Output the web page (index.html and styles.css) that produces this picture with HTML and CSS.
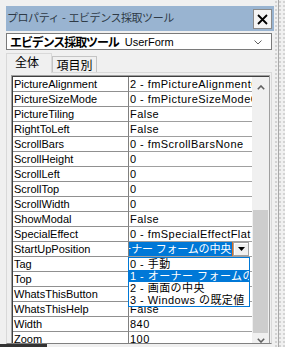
FILE: index.html
```html
<!DOCTYPE html>
<html lang="ja">
<head>
<meta charset="utf-8">
<link rel="stylesheet" href="styles.css">
</head>
<body>
<div class="win">
  <div class="titlebar">
    <span class="title">プロパティ - エビデンス採取ツール</span>
    <div class="close"><svg width="11" height="11" viewBox="0 0 11 11"><path d="M1 1L10 10M10 1L1 10" stroke="#000" stroke-width="1.8"/></svg></div>
  </div>
  <div class="combo">
    <b class="objname">エビデンス採取ツール</b>
    <span class="objtype">UserForm</span>
    <svg class="chev" width="8" height="5" viewBox="0 0 8 5"><path d="M0.5 0.5L4 4L7.5 0.5" fill="none" stroke="#606060" stroke-width="1"/></svg>
  </div>
  <div class="tabs">
    <div class="tab active">全体</div>
    <div class="tab">項目別</div>
  </div>
  <div class="page">
    <div class="grid">
      <div class="rows">
        <div class="row"><div class="name">PictureAlignment</div><div class="val">2 - fmPictureAlignmentCenter</div></div>
        <div class="row"><div class="name">PictureSizeMode</div><div class="val">0 - fmPictureSizeModeClip</div></div>
        <div class="row"><div class="name">PictureTiling</div><div class="val">False</div></div>
        <div class="row"><div class="name">RightToLeft</div><div class="val">False</div></div>
        <div class="row"><div class="name">ScrollBars</div><div class="val">0 - fmScrollBarsNone</div></div>
        <div class="row"><div class="name">ScrollHeight</div><div class="val">0</div></div>
        <div class="row"><div class="name">ScrollLeft</div><div class="val">0</div></div>
        <div class="row"><div class="name">ScrollTop</div><div class="val">0</div></div>
        <div class="row"><div class="name">ScrollWidth</div><div class="val">0</div></div>
        <div class="row"><div class="name">ShowModal</div><div class="val">False</div></div>
        <div class="row"><div class="name">SpecialEffect</div><div class="val">0 - fmSpecialEffectFlat</div></div>
        <div class="row"><div class="name">StartUpPosition</div>
          <div class="val editing">
            <div class="edit"><span class="edittext">1 - オーナー フォームの中央</span></div>
            <div class="dropbtn"><svg width="7" height="4" viewBox="0 0 7 4"><path d="M0 0H7L3.5 4Z" fill="#000"/></svg></div>
            <ul class="list">
              <li>0 - 手動</li>
              <li class="sel">1 - オーナー フォームの中央</li>
              <li>2 - 画面の中央</li>
              <li>3 - Windows の既定値</li>
            </ul>
          </div>
        </div>
        <div class="row"><div class="name">Tag</div><div class="val"></div></div>
        <div class="row"><div class="name">Top</div><div class="val">0</div></div>
        <div class="row"><div class="name">WhatsThisButton</div><div class="val">False</div></div>
        <div class="row"><div class="name">WhatsThisHelp</div><div class="val">False</div></div>
        <div class="row"><div class="name">Width</div><div class="val">840</div></div>
        <div class="row"><div class="name">Zoom</div><div class="val">100</div></div>
      </div>
      <div class="scrollbar">
        <div class="sbtn up"><svg width="8" height="5" viewBox="0 0 8 5"><path d="M0.8 4.2L4 1L7.2 4.2" fill="none" stroke="#606060" stroke-width="1.6"/></svg></div>
        <div class="track"><div class="thumb"></div></div>
        <div class="sbtn down"><svg width="8" height="5" viewBox="0 0 8 5"><path d="M0.8 0.8L4 4L7.2 0.8" fill="none" stroke="#606060" stroke-width="1.6"/></svg></div>
      </div>
    </div>
  </div>
  <div class="taskbar"></div>
</div>
<div class="edge"></div>
</body>
</html>
```

FILE: styles.css
```css
* { box-sizing: border-box; margin: 0; padding: 0; }
html, body { width: 285px; height: 347px; overflow: hidden; }
body {
  background: #f0f0f0;
  font-family: "Liberation Sans", "Noto Sans CJK JP", sans-serif;
  font-size: 11px;
  color: #000;
  display: flex;
}
.win {
  position: relative;
  width: 274px;
  height: 347px;
  padding: 6px 0 0 6px;
  display: flex;
  flex-direction: column;
}
.edge {
  flex: 1;
  background:
    linear-gradient(90deg, transparent 4px, #a8a8a8 4px, #a8a8a8 5px, transparent 5px),
    radial-gradient(circle, #d2d2d2 0.7px, transparent 1px) 0 0 / 4px 4px,
    #f0f0f0;
}
.titlebar {
  height: 25px;
  background: #99b4d1;
  display: flex;
  align-items: center;
  justify-content: space-between;
  padding: 0 2px 0 1px;
}
.title {
  font-family: "Noto Sans CJK JP", sans-serif;
  font-size: 11px;
  color: #2e3a46;
  letter-spacing: -0.45px;
  word-spacing: 1px;
  margin-top: -3px;
}
.close {
  width: 19px;
  height: 20px;
  background: #f4f4f4;
  border: 1px solid #8a8a8a;
  display: flex;
  align-items: center;
  justify-content: center;
  margin-top: 1px;
}
.combo {
  margin: 2px 2px 0 0;
  height: 17px;
  border: 1px solid #7a7a7a;
  background: #fff;
  display: flex;
  align-items: center;
  padding-left: 3px;
}
.objname {
  font-family: "Noto Sans CJK JP", sans-serif;
  font-size: 12px;
  font-weight: 700;
  letter-spacing: -1.1px;
  line-height: 15px;
}
.objtype {
  font-size: 11px;
  margin-left: 6px;
}
.chev { margin-left: auto; margin-right: 9px; margin-top: 1px; }
.tabs {
  margin-top: 3px;
  height: 19px;
  display: flex;
  align-items: flex-end;
  position: relative;
  z-index: 1;
}
.tab {
  font-family: "Noto Sans CJK JP", sans-serif;
  font-size: 12px;
  border: 1px solid #c4c4c4;
  border-bottom: none;
  height: 16px;
  width: 45px;
  display: flex;
  align-items: center;
  justify-content: center;
  line-height: 14px;
  background: #f0f0f0;
}
.tab.active {
  height: 20px;
  width: 46px;
  margin-bottom: -1px;
  border-color: #d9d9d9;
  padding-bottom: 3px;
  padding-right: 4px;
}
.page {
  height: 272px;
  margin-right: 2px;
  border: 1px solid #d9d9d9;
  border-bottom: 1px solid #808080;
  padding: 2px 1px 0 4px;
  overflow: hidden;
}
.grid {
  height: 272px;
  border: 1px solid #a0a0a0;
  display: flex;
}
.rows {
  flex: 1;
  border-left: 1px solid #404040;
  border-top: 1px solid #404040;
  background: #fff;
}
.row {
  position: relative;
  display: grid;
  grid-template-columns: 116px 1fr;
  height: 15px;
}
.name, .val {
  height: 15px;
  line-height: 14px;
  white-space: nowrap;
  overflow: hidden;
  border-bottom: 1px solid #a0a0a0;
}
.name {
  padding-left: 1px;
  border-right: 1px solid #808080;
  border-bottom-color: #909090;
}
.val { padding-left: 1px; letter-spacing: 0.45px; }
.val.editing {
  overflow: visible;
  display: flex;
  padding-left: 0;
  position: relative;
}
.edit {
  width: 104px;
  height: 14px;
  background: #0078d7;
  color: #fff;
  overflow: hidden;
  display: flex;
  justify-content: flex-end;
  border-right: 1px solid #e07020;
}
.edittext { white-space: nowrap; flex-shrink: 0; padding-right: 1px; letter-spacing: -0.2px; }
.dropbtn {
  width: 16px;
  height: 14px;
  background: #f0f0f0;
  border: 1px solid #a0a0a0;
  box-shadow: inset 1px 1px 0 #fff;
  display: flex;
  align-items: center;
  justify-content: center;
}
.list {
  position: absolute;
  left: -1px;
  top: 15px;
  width: 122px;
  list-style: none;
  background: #fff;
  border: 1px solid #0078d7;
  z-index: 2;
}
.list li {
  height: 12px;
  line-height: 12px;
  padding-left: 1px;
  white-space: nowrap;
  overflow: hidden;
}
.list li.sel { background: #0078d7; color: #fff; }
.scrollbar {
  width: 17px;
  background: #f0f0f0;
  display: flex;
  flex-direction: column;
  border-top: 1px solid #404040;
}
.sbtn {
  height: 20px;
  display: flex;
  align-items: center;
  justify-content: center;
  flex-shrink: 0;
}
.sbtn.down { height: 12px; }
.track { flex: 1; padding: 113px 1px 0 1px; }
.thumb { height: 123px; background: #cdcdcd; }
.taskbar {
  position: absolute;
  left: 0;
  bottom: 0;
  width: 47px;
  height: 3px;
  background: #333;
}
```
